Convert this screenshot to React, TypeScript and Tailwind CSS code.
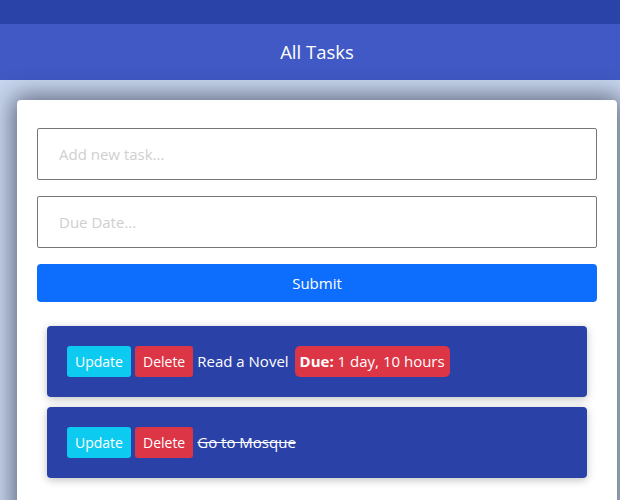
const tasks = [
  { title: "Read a Novel", done: false, due: "1 day, 10 hours" },
  { title: "Go to Mosque", done: true, due: "" },
];

export default function App() {
  return (
    <div className="min-h-[500px] bg-[#c8d7ef] font-['Open_Sans',sans-serif] overflow-hidden">
      <div className="h-[24px] bg-[#2a43a9]" />
      <div className="h-[56px] bg-[#4059c4] flex items-center justify-center pl-[14px]">
        <h1 className="text-white text-[18.5px] leading-none">All Tasks</h1>
      </div>
      <div className="ml-[17px] mt-[20px] w-[600px] bg-white rounded-[4px] shadow-[0_0_24px_4px_rgba(20,25,45,0.6)] px-5 pt-7 pb-10">
        <input
          placeholder="Add new task..."
          className="block w-full h-[52px] border border-[#767676] rounded-[2px] px-[21px] text-[15px] placeholder:text-[#cfcfcf] outline-none"
        />
        <input
          placeholder="Due Date..."
          className="block w-full h-[52px] mt-4 border border-[#767676] rounded-[2px] px-[21px] text-[15px] placeholder:text-[#cfcfcf] outline-none"
        />
        <button className="block w-full h-[38px] mt-4 bg-[#0d6efd] text-white text-[15px] rounded-[4px]">
          Submit
        </button>
        <div className="mt-6 px-[10px] flex flex-col gap-[10px]">
          {tasks.map((task, index) => (
            <div
              key={index}
              className="h-[71px] bg-[#2a41a8] rounded-[4px] shadow-[0_2px_8px_rgba(0,0,0,0.25)] flex items-center px-5 gap-[4px]"
            >
              <button className="h-[31px] px-[8px] bg-[#0dcaf0] text-white text-[14px] rounded-[3px]">Update</button>
              <button className="h-[31px] px-[8px] bg-[#dc3545] text-white text-[14px] rounded-[3px]">Delete</button>
              <span className={"text-white text-[15px] " + (task.done ? "line-through" : "")}>{task.title}</span>
              {task.due && (
                <span className="ml-[2px] h-[31px] px-[5px] flex items-center bg-[#dc3545] text-white text-[15px] rounded-[5px]">
                  <b>Due:</b>&nbsp;{task.due}
                </span>
              )}
            </div>
          ))}
        </div>
      </div>
    </div>
  );
}
